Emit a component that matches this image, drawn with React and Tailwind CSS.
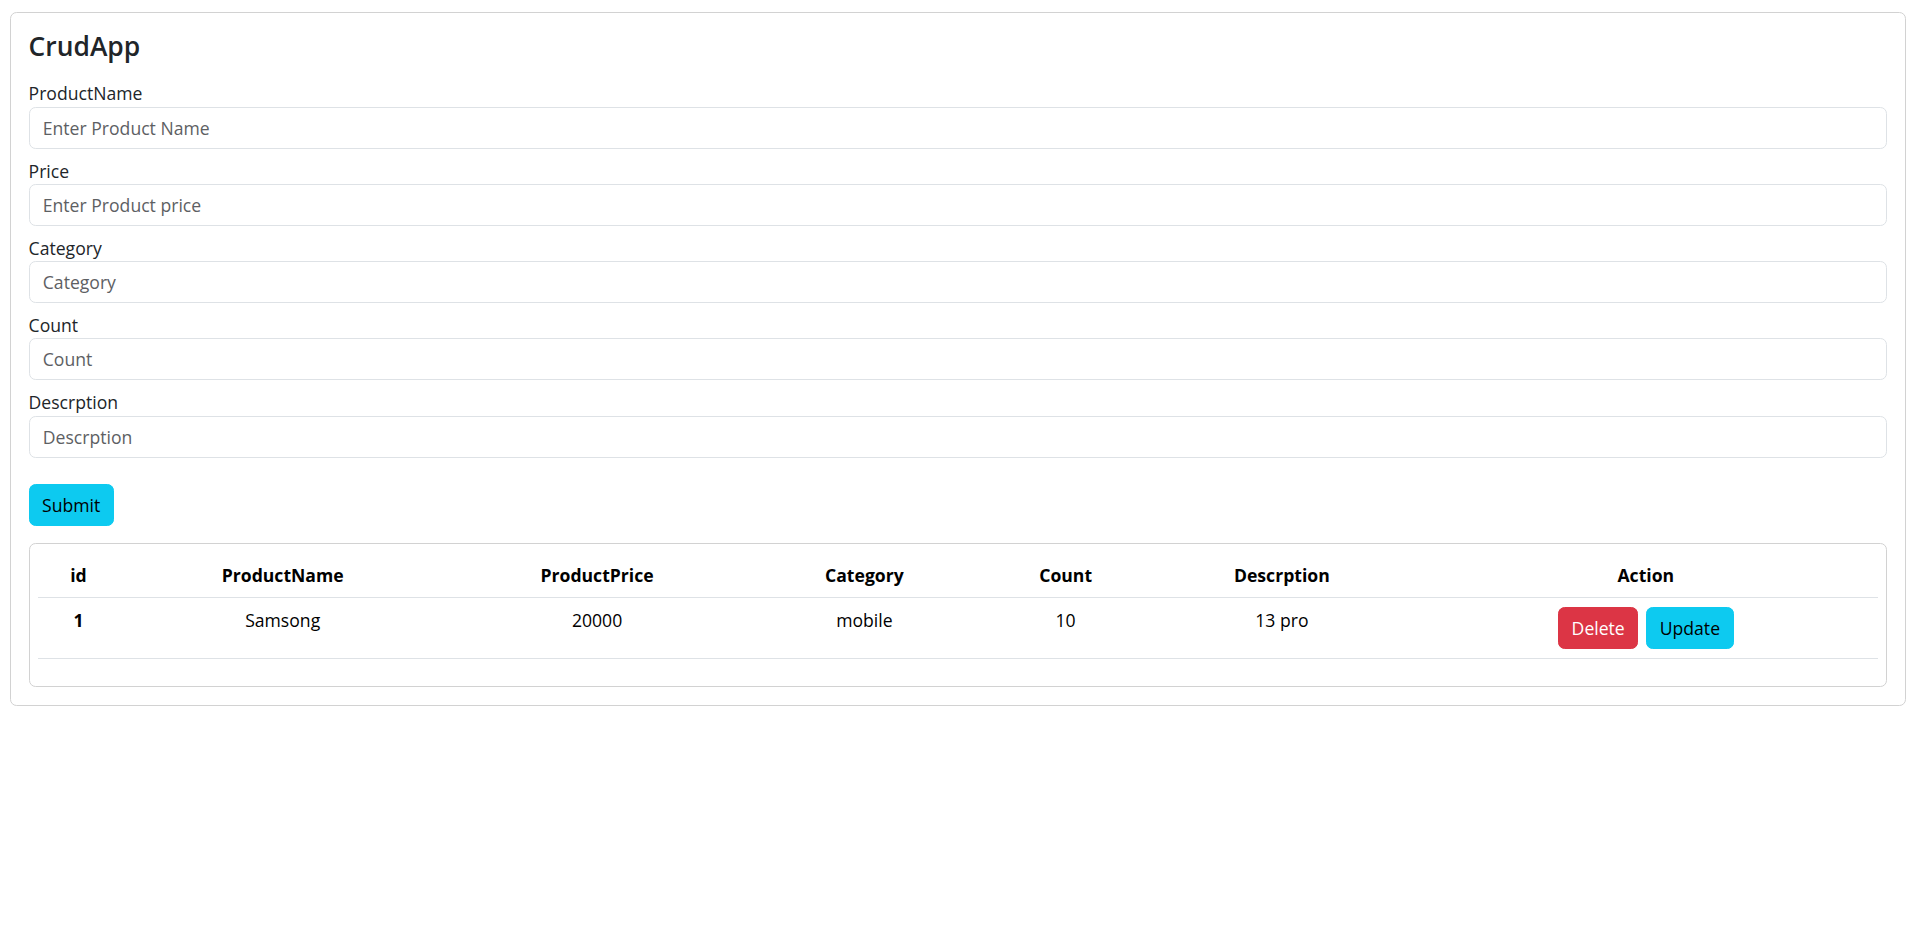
import React from "react";

const FONT = { fontFamily: '"Open Sans", "Noto Sans", sans-serif' };

const fields = [
  { label: "ProductName", placeholder: "Enter Product Name" },
  { label: "Price", placeholder: "Enter Product price" },
  { label: "Category", placeholder: "Category" },
  { label: "Count", placeholder: "Count" },
  { label: "Descrption", placeholder: "Descrption" },
];

const cols = [
  { name: "id", w: "w-[80px]" },
  { name: "ProductName", w: "w-[328px]" },
  { name: "ProductPrice", w: "w-[300px]" },
  { name: "Category", w: "w-[234px]" },
  { name: "Count", w: "w-[168px]" },
  { name: "Descrption", w: "w-[264px]" },
  { name: "Action", w: "w-[463px]" },
];

export default function App() {
  return (
    <div className="bg-white min-h-[937px] pt-[12px] px-[10px] text-[#212529]" style={FONT}>
      <div className="border border-[#d2d2d2] rounded-[6.6px] p-[17.6px]">
        <h4 className="text-[26.4px] leading-[31.7px] font-semibold mb-[18px]">CrudApp</h4>
        <form onSubmit={(e) => e.preventDefault()}>
          {fields.map((f) => (
            <div key={f.label} className="mb-[8.8px]">
              <label className="block text-[17.6px] leading-[26.4px]">{f.label}</label>
              <input
                type="text"
                placeholder={f.placeholder}
                className="block w-full h-[42px] border border-[#dee2e6] rounded-[6.6px] px-[13.2px] text-[17.6px] leading-[26.4px] placeholder:text-[#5d6063] outline-none"
              />
            </div>
          ))}
          <button
            type="submit"
            className="mt-[18px] h-[42px] px-[12.5px] rounded-[6.6px] bg-[#0dcaf0] border border-[#0dcaf0] text-black text-[17.6px] leading-[26.4px]"
          >
            Submit
          </button>
        </form>
        <div className="mt-[17px] border border-[#d2d2d2] rounded-[6.6px] p-[8.8px]">
          <table className="w-full table-fixed border-collapse mb-[18px] text-black">
            <thead>
              <tr className="border-b border-[#dee2e6]">
                {cols.map((c) => (
                  <th
                    key={c.name}
                    className={`${c.w} p-[8.8px] text-center font-bold text-[17.6px] leading-[26.4px]`}
                  >
                    {c.name}
                  </th>
                ))}
              </tr>
            </thead>
            <tbody>
              <tr className="border-b border-[#dee2e6] align-top">
                <th className="px-[8.8px] py-[9.2px] text-center font-bold text-[17.6px] leading-[26.4px]">1</th>
                <td className="px-[8.8px] py-[9.2px] text-center text-[17.6px] leading-[26.4px]">Samsong</td>
                <td className="px-[8.8px] py-[9.2px] text-center text-[17.6px] leading-[26.4px]">20000</td>
                <td className="px-[8.8px] py-[9.2px] text-center text-[17.6px] leading-[26.4px]">mobile</td>
                <td className="px-[8.8px] py-[9.2px] text-center text-[17.6px] leading-[26.4px]">10</td>
                <td className="px-[8.8px] py-[9.2px] text-center text-[17.6px] leading-[26.4px]">13 pro</td>
                <td className="px-[8.8px] py-[9.2px] text-center">
                  <div className="flex justify-center gap-[8px]">
                    <button className="h-[42px] px-[12.5px] rounded-[6.6px] bg-[#dc3545] border border-[#dc3545] text-white text-[17.6px] leading-[26.4px]">
                      Delete
                    </button>
                    <button className="h-[42px] px-[12.5px] rounded-[6.6px] bg-[#0dcaf0] border border-[#0dcaf0] text-black text-[17.6px] leading-[26.4px]">
                      Update
                    </button>
                  </div>
                </td>
              </tr>
            </tbody>
          </table>
        </div>
      </div>
    </div>
  );
}
